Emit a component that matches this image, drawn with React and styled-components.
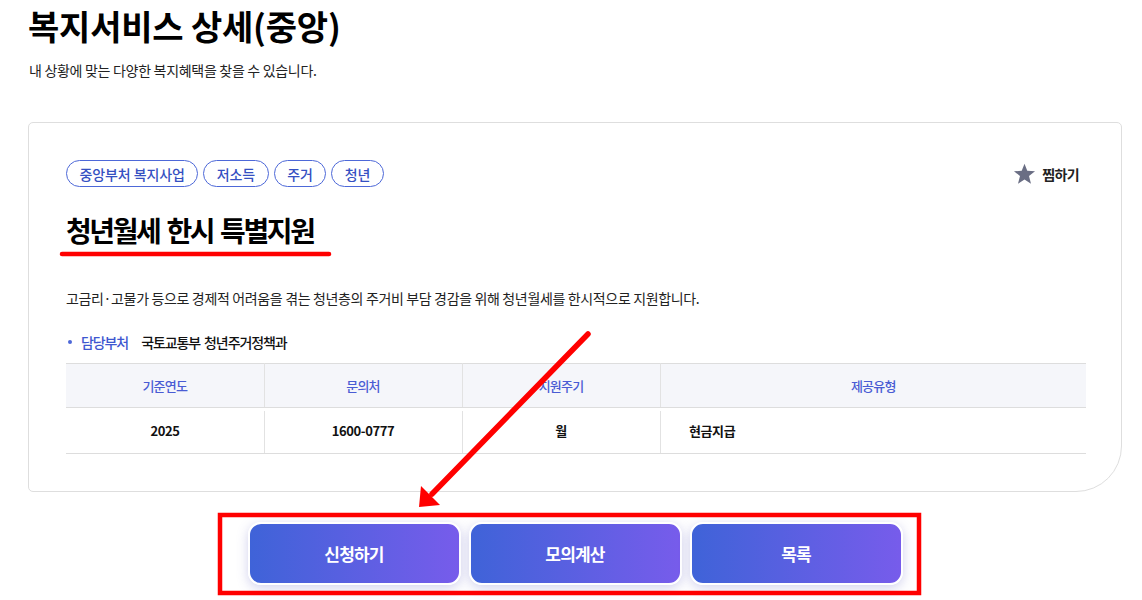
import React from "react";
import styled, { createGlobalStyle } from "styled-components";

const GlobalStyle = createGlobalStyle`
  html, body { margin: 0; padding: 0; background: #fff; }
  body { font-family: "Noto Sans CJK KR", "Noto Sans", sans-serif; color: #111; }
  * { box-sizing: border-box; }
`;

const Page = styled.div`
  position: relative;
  width: 1142px;
  height: 600px;
  padding: 6px 20px 0 28px;
  overflow: hidden;
`;

const Title = styled.h1`
  margin: 0;
  font-size: 34px;
  line-height: 40px;
  font-weight: 700;
  letter-spacing: -0.2px;
  color: #000;
`;

const Subtitle = styled.p`
  margin: 14px 0 0 1px;
  font-size: 14px;
  line-height: 20px;
  letter-spacing: -0.3px;
  color: #222;
`;

const Card = styled.section`
  margin-top: 42px;
  border: 1px solid #dedede;
  border-radius: 5px 5px 46px 5px;
  padding: 37px 35px 37px 37px;
  background: #fff;
`;

const TopRow = styled.div`
  display: flex;
  align-items: center;
  justify-content: space-between;
`;

const Tags = styled.div`
  display: flex;
  gap: 5px;
`;

const Tag = styled.span`
  display: inline-flex;
  align-items: center;
  height: 27px;
  padding: 0 12.5px;
  border: 1px solid #4d68d8;
  border-radius: 14px;
  font-size: 14px;
  letter-spacing: -0.1px;
  color: #3550c2;
  font-weight: 500;
`;

const FavButton = styled.button`
  display: flex;
  align-items: center;
  gap: 6px;
  margin-right: 7px;
  padding: 0;
  border: 0;
  background: none;
  font-family: inherit;
  font-size: 14px;
  font-weight: 700;
  letter-spacing: -0.6px;
  color: #222;
  cursor: pointer;
`;

const Heading = styled.h2`
  margin: 25px 0 0;
  font-size: 28px;
  line-height: 36px;
  font-weight: 700;
  letter-spacing: -2.4px;
  word-spacing: 3px;
  color: #000;
`;

const Description = styled.p`
  margin: 40px 0 0;
  font-size: 14px;
  line-height: 20px;
  letter-spacing: -0.35px;
  color: #222;
`;

const InfoRow = styled.div`
  display: flex;
  align-items: center;
  margin-top: 24px;
  font-size: 14px;
  line-height: 20px;
  letter-spacing: -1.1px;
`;

const Bullet = styled.span`
  width: 4px;
  height: 4px;
  border-radius: 50%;
  background: #4d68d8;
  margin: 0 9px 0 2px;
`;

const InfoLabel = styled.span`
  color: #3e57d0;
  font-weight: 500;
  margin-right: 13px;
`;

const InfoValue = styled.span`
  color: #111;
  font-weight: 500;
  word-spacing: 2px;
`;

const Table = styled.table`
  margin-top: 11px;
  width: 1020px;
  border-collapse: collapse;
  table-layout: fixed;
  border-top: 1px solid #dddddd;
  border-bottom: 1px solid #dddddd;
`;

const Th = styled.th`
  height: 44px;
  padding: 0;
  background: #f5f6fa;
  border-bottom: 1px solid #dddddd;
  border-left: ${(p) => (p.$first ? "none" : "1px solid #e2e2e2")};
  font-size: 13px;
  font-weight: 500;
  letter-spacing: -0.8px;
  color: #4a5cd4;
  text-align: center;
`;

const Td = styled.td`
  position: relative;
  height: 46px;
  padding: ${(p) => (p.$left ? "0 0 0 29px" : "0")};
  font-size: 13px;
  font-weight: 700;
  letter-spacing: -0.4px;
  color: #111;
  text-align: ${(p) => (p.$left ? "left" : "center")};
  &::before {
    content: "";
    display: ${(p) => (p.$first ? "none" : "block")};
    position: absolute;
    left: 0;
    top: 3px;
    bottom: 0;
    width: 1px;
    background: #e2e2e2;
  }
`;

const ButtonBar = styled.div`
  display: flex;
  justify-content: center;
  gap: 8px;
  margin-top: 30px;
`;

const ActionButton = styled.button`
  width: 213px;
  height: 63px;
  border: 2px solid #fff;
  border-radius: 13px;
  background: linear-gradient(90deg, #3f63d8 0%, #775ceb 100%);
  box-shadow: 0 3px 12px rgba(90, 90, 190, 0.28);
  color: #fff;
  font-family: inherit;
  font-size: 17px;
  font-weight: 700;
  letter-spacing: -0.8px;
  cursor: pointer;
`;

const Overlay = styled.svg`
  position: absolute;
  left: 0;
  top: 0;
  width: 1142px;
  height: 600px;
  pointer-events: none;
`;

const Star = () => (
  <svg width="23" height="22" viewBox="0 0 24 23" aria-hidden="true">
    <path
      d="M12 0.8 L14.9 8.2 L23 8.6 L16.7 13.7 L18.8 21.6 L12 17.2 L5.2 21.6 L7.3 13.7 L1 8.6 L9.1 8.2 Z"
      fill="#6a6e84"
    />
  </svg>
);

const tags = ["중앙부처 복지사업", "저소득", "주거", "청년"];
const headers = ["기준연도", "문의처", "지원주기", "제공유형"];

export default function App() {
  return (
    <>
      <GlobalStyle />
      <Page>
        <Title>복지서비스 상세(중앙)</Title>
        <Subtitle>내 상황에 맞는 다양한 복지혜택을 찾을 수 있습니다.</Subtitle>
        <Card>
          <TopRow>
            <Tags>
              {tags.map((t) => (
                <Tag key={t}>{t}</Tag>
              ))}
            </Tags>
            <FavButton>
              <Star />
              찜하기
            </FavButton>
          </TopRow>
          <Heading>청년월세 한시 특별지원</Heading>
          <Description>
            고금리·고물가 등으로 경제적 어려움을 겪는 청년층의 주거비 부담 경감을 위해 청년월세를 한시적으로 지원합니다.
          </Description>
          <InfoRow>
            <Bullet />
            <InfoLabel>담당부처</InfoLabel>
            <InfoValue>국토교통부 청년주거정책과</InfoValue>
          </InfoRow>
          <Table>
            <colgroup>
              <col style={{ width: 198 }} />
              <col style={{ width: 198 }} />
              <col style={{ width: 198 }} />
              <col />
            </colgroup>
            <thead>
              <tr>
                {headers.map((h, i) => (
                  <Th key={h} $first={i === 0}>
                    {h}
                  </Th>
                ))}
              </tr>
            </thead>
            <tbody>
              <tr>
                <Td $first>2025</Td>
                <Td>1600-0777</Td>
                <Td>월</Td>
                <Td $left>현금지급</Td>
              </tr>
            </tbody>
          </Table>
        </Card>
        <ButtonBar>
          <ActionButton>신청하기</ActionButton>
          <ActionButton>모의계산</ActionButton>
          <ActionButton>목록</ActionButton>
        </ButtonBar>
        <Overlay viewBox="0 0 1142 600">
          <line x1="62" y1="254" x2="329" y2="254" stroke="#ff0000" strokeWidth="4.5" strokeLinecap="round" />
          <line x1="588" y1="334" x2="432" y2="494" stroke="#ff0000" strokeWidth="5.5" strokeLinecap="round" />
          <polygon points="419,507 421,486 440,505" fill="#ff0000" />
          <rect x="220" y="515" width="699" height="78" fill="none" stroke="#ff0000" strokeWidth="4.5" />
        </Overlay>
      </Page>
    </>
  );
}
